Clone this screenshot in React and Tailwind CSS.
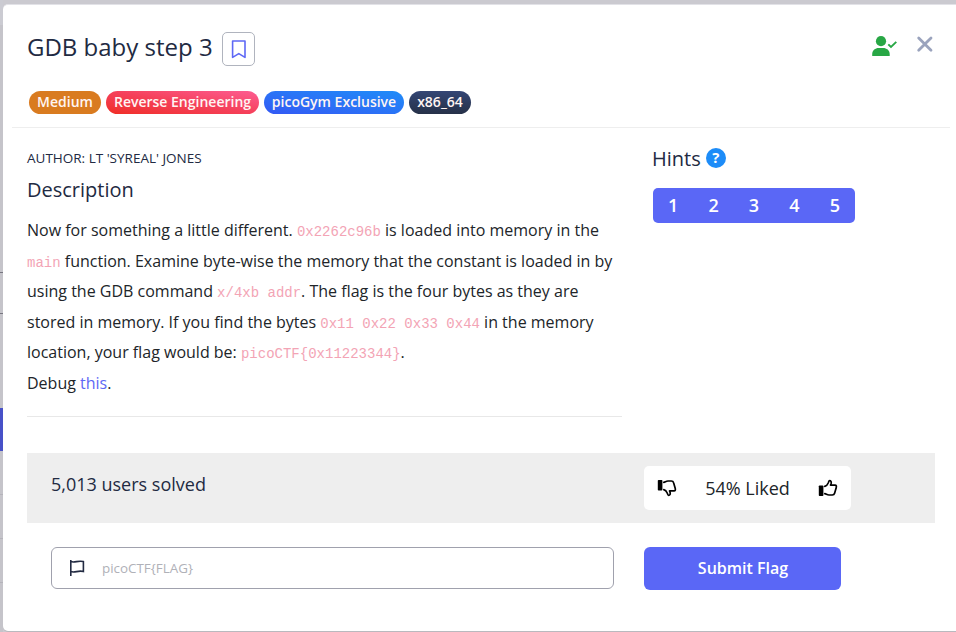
import React from "react";

const tags = [
  { label: "Medium", box: "w-[72px] bg-[#d97b20]" },
  { label: "Reverse Engineering", box: "w-[153px] bg-linear-to-tr from-[#f02d22] via-[#f5405a] to-[#fd5c92]" },
  { label: "picoGym Exclusive", box: "w-[140px] bg-linear-to-tr from-[#3358f4] to-[#1d8cf8]" },
  { label: "x86_64", box: "w-[62px] bg-linear-to-b from-[#344675] to-[#263148]" },
];

const Code = ({ children }) => (
  <code className="font-['Liberation_Mono',monospace] text-[14px] leading-none text-[#f3a4b5]">{children}</code>
);

function Thumb({ className }) {
  return (
    <svg className={className} width="20" height="18" viewBox="0 0 20 18" fill="none" stroke="#000" strokeWidth="1.7" strokeLinejoin="round" strokeLinecap="round">
      <rect x="0.8" y="6.5" width="4.6" height="10.5" rx="0.8" fill="#000" stroke="none" />
      <path d="M6.8 7.4C8.4 7 9.5 5.7 10.2 4C10.7 2.7 10.8 1.7 11.6 1.7C12.9 1.7 13.4 2.8 13.2 4.2C13 5.2 12.4 6 12.5 6.2H17C18.4 6.2 18.6 7.3 18.2 8.7L16.6 14.2C16.2 15.8 15.5 16 14.3 16H11C9 16 8.4 15 6.8 14.7" />
    </svg>
  );
}

export default function App() {
  return (
    <div className="flex h-[632px] w-[956px] overflow-hidden bg-[#c5c4ca] font-['Open_Sans',sans-serif] text-[#222a42]">
      <div className="flex w-[3px] shrink-0 flex-col">
        <div className="h-[25px] bg-[#cbcbd2]" />
        <div className="h-[247px]" />
        <div className="h-[42px] border-y border-[#777680]" />
        <div className="h-[94px]" />
        <div className="h-[43px] bg-[#4751c8]" />
        <div className="h-11 border-b border-[#b5b4bb]" />
        <div className="h-11 border-b border-[#b5b4bb]" />
        <div className="h-11 border-b border-[#b5b4bb]" />
      </div>
      <div className="flex flex-1 flex-col bg-[#cbcad0] pt-1">
        <div className="h-[627px] rounded-l-[5px] border-t border-[#e2e2e7] bg-white shadow-[0_1px_0_#b9b9be]">
          <header className="ml-[9px] mr-[6px] h-[123px] border-b border-[#eeeeee] pl-[15px]">
            <div className="flex h-[80px] items-start pt-[27px]">
              <h1 className="-mt-[2px] w-[195px] whitespace-nowrap text-[24px] leading-[34px]">GDB baby step 3</h1>
              <button className="flex h-[34px] w-[33px] items-center justify-center rounded-[5px] border border-[#b0b4be]">
                <svg width="15" height="20" viewBox="0 0 15 20" fill="none" stroke="#5e68f5" strokeWidth="1.6">
                  <path d="M1.6 2H14V18.4L7.8 14.6L1.6 18.4Z" strokeLinejoin="round" />
                </svg>
              </button>
              <svg className="ml-[617px] mt-[3px]" width="26" height="22" viewBox="0 0 26 22" fill="#28a745">
                <circle cx="9" cy="6.2" r="5.1" />
                <path d="M0.2 21V19C0.2 15.2 3.5 13 6.5 13H11.2C14.5 13 17.7 15.2 17.7 19V21Z" />
                <path d="M16.3 9.3L19 12L24.3 6.9" fill="none" stroke="#28a745" strokeWidth="1.9" />
              </svg>
              <svg className="ml-[18px] mt-[4px]" width="17" height="17" viewBox="0 0 17 17" fill="none" stroke="#9aa3bd" strokeWidth="2.8" strokeLinecap="round">
                <path d="M2.7 2L15 14.3M15 2L2.7 14.3" />
              </svg>
            </div>
            <div className="flex gap-[5px] pl-[2px] pt-[6px]">
              {tags.map((t) => (
                <span key={t.label} className={"flex h-[23px] shrink-0 items-center justify-center whitespace-nowrap rounded-full pb-[2px] text-[14px] font-semibold leading-none text-[#fff5f3] " + t.box}>
                  {t.label}
                </span>
              ))}
            </div>
          </header>

          <div className="flex h-[325px] pl-6">
            <section className="flex w-[595px] shrink-0 flex-col">
              <div className="mt-[22px] h-[17px] text-[13.5px] leading-[17px]">AUTHOR: LT 'SYREAL' JONES</div>
              <h2 className="mt-[8px] h-[30px] text-[20px] leading-[30px]">Description</h2>
              <p className="mt-[10px] whitespace-nowrap text-[16px] leading-[30.6px] text-[#212529]">
                Now for something a little different. <Code>0x2262c96b</Code> is loaded into memory in the<br />
                <Code>main</Code> function. Examine byte-wise the memory that the constant is loaded in by<br />
                using the GDB command <Code>x/4xb addr</Code>. The flag is the four bytes as they are<br />
                stored in memory. If you find the bytes <Code>0x11 0x22 0x33 0x44</Code> in the memory<br />
                location, your flag would be: <Code>picoCTF{"{"}0x11223344{"}"}</Code>.<br />
                Debug <a className="text-[#5e68f5]">this</a>.
              </p>
              <hr className="mt-[17px] border-[#e8e8e8]" />
            </section>
            <aside className="ml-[31px]">
              <div className="-ml-px mt-[15px] flex h-[30px] items-center text-[20px]">
                <span className="pt-px">Hints</span>
                <span className="ml-[5px] flex h-5 w-5 items-center justify-center rounded-full bg-[#1d8cf8] pb-px text-[15px] font-bold text-white">?</span>
              </div>
              <div className="mt-[15px] flex h-[35px] w-[202px] overflow-hidden rounded-[5px] bg-[#5a67f6] text-[18px] font-semibold text-white">
                {[1, 2, 3, 4, 5].map((n) => (
                  <button key={n} className="flex-1">{n}</button>
                ))}
              </div>
            </aside>
          </div>

          <div className="ml-6 flex h-[70px] w-[908px] bg-[#eeeeee] pl-6 pt-[13px]">
            <div className="w-[593px] pt-[4px] text-[18px] leading-[28px]">5,013 users solved</div>
            <div className="flex h-[44px] w-[207px] items-center rounded-[5px] bg-white pl-[13px] text-[18px] text-[#212529]">
              <Thumb className="-scale-y-100" />
              <span className="w-[141px] text-center">54% Liked</span>
              <Thumb />
            </div>
          </div>

          <div className="flex pl-12 pt-6">
            <div className="flex h-[42px] w-[563px] items-center rounded-[6px] border border-[#a0a1ad] pl-[17px] text-[13.4px] text-[#b0b1b8]">
              <svg className="mr-[16px]" width="17" height="18" viewBox="0 0 17 18" fill="none" stroke="#222a42" strokeWidth="1.6">
                <path d="M1.8 1V17M1.8 2.6C6 4.2 9 1 14.4 2.6V12.5C9 11 6 14.2 1.8 12.6" />
              </svg>
              <span className="pt-px">picoCTF{"{"}FLAG{"}"}</span>
            </div>
            <button className="ml-[30px] h-[43px] w-[197px] rounded-[6px] bg-[#5a67f6] pb-px pl-px text-[16px] font-semibold text-white">Submit Flag</button>
          </div>
        </div>
      </div>
    </div>
  );
}
